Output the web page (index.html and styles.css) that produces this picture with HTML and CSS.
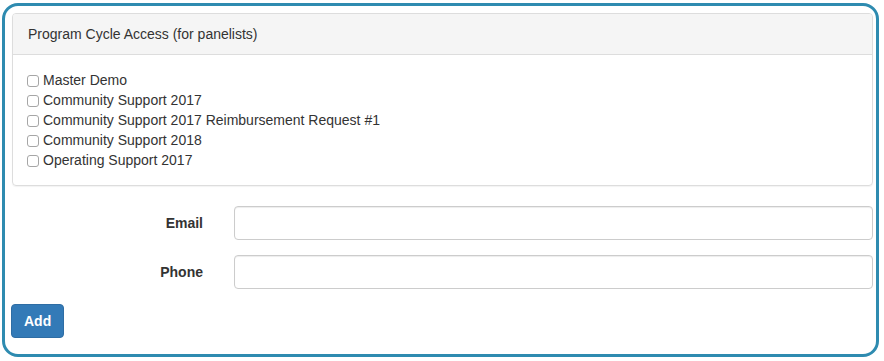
FILE: index.html
```html
<!DOCTYPE html>
<html>

<head>
  <meta charset="utf-8">
  <meta name="viewport" content="width=device-width">
  <title>Panelist Access</title>
  <link rel="stylesheet" href="styles.css">
</head>

<body>

  <div class="frame">
    <div class="panel">
      <div class="panel-heading">Program Cycle Access (for panelists)</div>
      <div class="panel-body">
        <label class="check"><input type="checkbox">Master Demo</label>
        <label class="check"><input type="checkbox">Community Support 2017</label>
        <label class="check"><input type="checkbox">Community Support 2017 Reimbursement Request #1</label>
        <label class="check"><input type="checkbox">Community Support 2018</label>
        <label class="check"><input type="checkbox">Operating Support 2017</label>
      </div>
    </div>

    <form class="user-form" onsubmit="return false">
      <div class="form-row">
        <label for="email">Email</label>
        <input id="email" type="text">
      </div>
      <div class="form-row">
        <label for="phone">Phone</label>
        <input id="phone" type="text">
      </div>
      <button type="submit" class="btn">Add</button>
    </form>
  </div>

</body>

</html>
```

FILE: styles.css
```css
body {
  margin: 0;
  font-family: 'Liberation Sans', Arial, sans-serif;
  font-size: 14px;
  line-height: 20px;
  color: #333;
  background: #fff;
}

.frame {
  box-sizing: border-box;
  width: 877px;
  height: 354px;
  margin: 3px 0 0 2px;
  padding: 7px 3px 0 6px;
  border: 3px solid #2e8bb0;
  border-radius: 16px;
}

.panel {
  margin: 0 0 20px 1px;
  border: 1px solid #ddd;
  border-radius: 4px;
  box-shadow: 0 1px 1px rgba(0, 0, 0, 0.05);
}

.panel-heading {
  padding: 10px 15px;
  background-color: #f5f5f5;
  border-bottom: 1px solid #ddd;
  border-radius: 3px 3px 0 0;
}

.panel-body {
  padding: 15px;
}

.check {
  display: flex;
  align-items: center;
  height: 20px;
}

.check input {
  appearance: none;
  width: 12px;
  height: 12px;
  margin: 1px 4px 0 -1px;
  border: 1px solid #a6a6a6;
  border-radius: 3px;
  background: #fff;
}

.form-row {
  display: flex;
  align-items: center;
  margin-bottom: 15px;
}

.form-row label {
  width: 192px;
  padding-right: 31px;
  text-align: right;
  font-weight: bold;
}

.form-row input {
  flex: 1;
  box-sizing: border-box;
  height: 34px;
  padding: 6px 12px;
  border: 1px solid #ccc;
  border-radius: 4px;
  box-shadow: inset 0 1px 1px rgba(0, 0, 0, 0.075);
  font: inherit;
}

.btn {
  padding: 6px 12px;
  height: 34px;
  border: 1px solid #2e6da4;
  border-radius: 4px;
  background-color: #337ab7;
  color: #fff;
  font: bold 14px 'Liberation Sans', Arial, sans-serif;
  line-height: 20px;
  cursor: pointer;
}
```
